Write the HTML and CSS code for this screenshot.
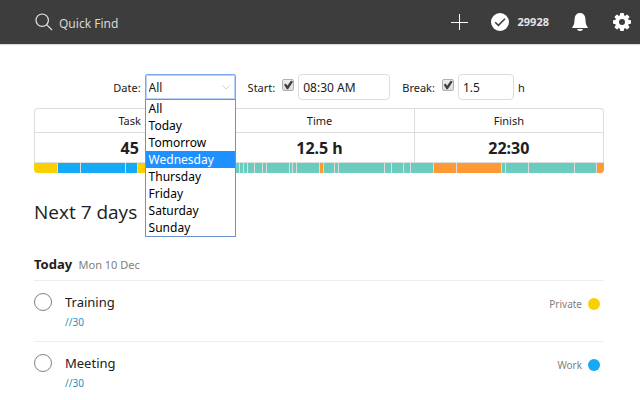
FILE: index.html
```html
<!DOCTYPE html>
<html lang="en">
<head>
<meta charset="utf-8">
<title>Next 7 days</title>
<link rel="stylesheet" href="styles.css">
</head>
<body>
<header class="topbar">
  <label class="search">
    <svg width="18" height="18" viewBox="0 0 18 18" fill="none" stroke="#e4e4e4" stroke-width="1.2" aria-hidden="true"><circle cx="7.2" cy="7.2" r="6.2"/><path d="M11.6 11.6 17 17"/></svg>
    <input class="search-input" type="text" placeholder="Quick Find" aria-label="Quick Find">
  </label>
  <nav class="actions">
    <button class="icon-button" aria-label="Add task"><svg width="18" height="18" viewBox="0 0 18 18" stroke="#fff" stroke-width="1"><path d="M9.5 1v16M1 9.5h17"/></svg></button>
    <button class="icon-button karma"><svg width="18" height="18" viewBox="0 0 18 18" aria-hidden="true"><circle cx="9" cy="9" r="9" fill="#fff"/><path d="M4.2 9.2 7.4 12.4 14 5.8" fill="none" stroke="#3d3d3d" stroke-width="1.5"/></svg><span>29928</span></button>
    <button class="icon-button" aria-label="Notifications"><svg width="16" height="18" viewBox="0 0 16 18" fill="#fff"><path d="M8 0C5 0 3 2 2.7 5L2.2 10.2C2 12 .4 13.2.2 15H15.8C15.6 13.2 14 12 13.8 10.2L13.3 5C13 2 11 0 8 0ZM5 16h6c-.4 1.3-1.500 2-3 2s-2.600-.7-3-2Z"/></svg></button>
    <button class="icon-button" aria-label="Settings"><svg width="18" height="18" viewBox="0 0 18 18"><g fill="#fff"><circle cx="9" cy="9" r="7"/><rect x="7" y="0" width="4" height="18" rx="1"/><rect x="7" y="0" width="4" height="18" rx="1" transform="rotate(45 9 9)"/><rect x="7" y="0" width="4" height="18" rx="1" transform="rotate(90 9 9)"/><rect x="7" y="0" width="4" height="18" rx="1" transform="rotate(135 9 9)"/></g><circle cx="9" cy="9" r="3" fill="#3d3d3d"/></svg></button>
  </nav>
</header>

<main class="content">
  <form class="filters">
    <div class="filter">
      <label for="date">Date:</label>
      <div class="dropdown">
        <select id="date" class="field date-field"><option>All</option><option>Today</option><option>Tomorrow</option><option>Wednesday</option><option>Thursday</option><option>Friday</option><option>Saturday</option><option>Sunday</option></select>
        <svg class="chevron" width="8" height="5" viewBox="0 0 8 5" fill="none" stroke="#d0d0d0" aria-hidden="true"><path d="M.5.5 4 4 7.500.5"/></svg>
        <ul class="menu" role="listbox" aria-label="Date">
          <li role="option">All</li>
          <li role="option">Today</li>
          <li role="option">Tomorrow</li>
          <li role="option" class="active" aria-selected="true">Wednesday</li>
          <li role="option">Thursday</li>
          <li role="option">Friday</li>
          <li role="option">Saturday</li>
          <li role="option">Sunday</li>
        </ul>
      </div>
    </div>
    <div class="filter">
      <label for="start-on">Start:</label>
      <div class="pair">
        <input id="start-on" class="check" type="checkbox" checked>
        <input class="field start-field" type="text" value="08:30 AM" aria-label="Start time">
      </div>
    </div>
    <div class="filter">
      <label for="break-on">Break:</label>
      <div class="pair">
        <input id="break-on" class="check" type="checkbox" checked>
        <input id="break-hours" class="field break-field" type="text" value="1.5" aria-label="Break hours">
        <label for="break-hours">h</label>
      </div>
    </div>
  </form>

  <section class="summary">
    <table class="totals">
      <thead><tr><th>Task</th><th>Time</th><th>Finish</th></tr></thead>
      <tbody><tr><td>45</td><td>12.5 h</td><td>22:30</td></tr></tbody>
    </table>
    <div class="timeline">
      <i class="yellow" style="flex-grow:23"></i>
      <i class="blue" style="flex-grow:22"></i>
      <i class="blue" style="flex-grow:44"></i>
      <i class="blue" style="flex-grow:11"></i>
      <i class="yellow" style="flex-grow:60"></i>
      <i style="flex-grow:40"></i>
      <i style="flex-grow:3"></i>
      <i style="flex-grow:3"></i>
      <i style="flex-grow:6"></i>
      <i style="flex-grow:7"></i>
      <i style="flex-grow:3"></i>
      <i style="flex-grow:22"></i>
      <i style="flex-grow:2"></i>
      <i style="flex-grow:3"></i>
      <i style="flex-grow:22"></i>
      <i class="orange" style="flex-grow:3"></i>
      <i style="flex-grow:10"></i>
      <i style="flex-grow:3"></i>
      <i style="flex-grow:45"></i>
      <i style="flex-grow:6"></i>
      <i style="flex-grow:11"></i>
      <i style="flex-grow:6"></i>
      <i style="flex-grow:22"></i>
      <i class="orange" style="flex-grow:22"></i>
      <i class="orange" style="flex-grow:44"></i>
      <i style="flex-grow:3"></i>
      <i style="flex-grow:22"></i>
      <i style="flex-grow:45"></i>
      <i style="flex-grow:21"></i>
      <i class="orange" style="flex-grow:7"></i>
    </div>
  </section>

  <h1 class="title">Next 7 days</h1>

  <section>
    <h2 class="day">Today <span class="day-date">Mon 10 Dec</span></h2>
    <ul class="tasks">
      <li class="task">
        <input id="training" class="done" type="checkbox">
        <div class="task-body">
          <label class="task-name" for="training">Training</label>
          <a class="estimate" href="#training">//30</a>
        </div>
        <span class="project">Private <i class="dot yellow"></i></span>
      </li>
      <li class="task">
        <input id="meeting" class="done" type="checkbox">
        <div class="task-body">
          <label class="task-name" for="meeting">Meeting</label>
          <a class="estimate" href="#meeting">//30</a>
        </div>
        <span class="project">Work <i class="dot blue"></i></span>
      </li>
    </ul>
  </section>
</main>
</body>
</html>
```
FILE: styles.css
```css
* {
  box-sizing: border-box;
}

body {
  margin: 0;
  background: #fff;
  color: #202020;
  font: 12px/16px "Noto Sans", "Open Sans", sans-serif;
}

input,
select,
button {
  margin: 0;
  font: inherit;
  color: inherit;
}

.topbar {
  display: flex;
  align-items: center;
  justify-content: space-between;
  height: 44px;
  padding: 0 9px 0 35px;
  background: #3d3d3d;
  box-shadow: 0 1px 1px #ddd;
}

.search {
  display: flex;
  align-items: center;
  gap: 6px;
}

.search-input {
  width: 160px;
  padding: 4px 0 0;
  border: 0;
  outline: 0;
  background: none;
}

.search-input::placeholder {
  color: #d8d8d8;
  opacity: 1;
}

.actions {
  display: flex;
  align-items: center;
  gap: 23px;
}

.icon-button {
  display: flex;
  align-items: center;
  gap: 9px;
  padding: 0;
  border: 0;
  background: none;
  color: #e4e4e4;
}

.icon-button:last-child {
  margin-left: 2px;
}

.karma {
  font-size: 11px;
  font-weight: 700;
}

.content {
  padding: 30px 36px 0 34px;
}

.filters {
  display: flex;
  align-items: center;
  justify-content: center;
  gap: 12px;
}

.filter,
.pair {
  display: flex;
  align-items: center;
  gap: 4px;
}

.filter + .filter {
  gap: 7px;
}

.filter label {
  padding-top: 2px;
  font-size: 11px;
}

.dropdown {
  position: relative;
}

.field {
  display: block;
  height: 26px;
  padding: 1px 4px 0;
  border: 1px solid #ddd;
  border-radius: 4px;
  outline: 0;
  background: #fff;
}

.date-field {
  width: 91px;
  padding: 1px 3px 0;
  border: 1px solid #7aa7ec;
  border-radius: 2px;
  box-shadow: inset 0 0 0 1px #b9d2f8;
  appearance: none;
}

.start-field {
  width: 92px;
}

.break-field {
  width: 56px;
}

.chevron {
  position: absolute;
  top: 11px;
  right: 6px;
}

.menu {
  position: absolute;
  top: 100%;
  left: 0;
  z-index: 1;
  width: 91px;
  margin: -1px 0 0;
  padding: 0;
  border: 1px solid #6c93cf;
  background: #fff;
  color: #000;
  line-height: 17px;
  list-style: none;
}

.menu li {
  padding: 0 3px;
}

.menu .active {
  background: #1e90ff;
  color: #fff;
}

.check {
  display: grid;
  place-items: center;
  width: 12px;
  height: 12px;
  margin-bottom: 4px;
  border: 1px solid #b0b0b0;
  border-radius: 2px;
  background: linear-gradient(#eee, #ddd);
  appearance: none;
}

.check:checked::after {
  content: "";
  width: 10px;
  height: 10px;
  background: #404040;
  clip-path: polygon(8% 48%, 25% 36%, 42% 58%, 78% 5%, 98% 18%, 48% 92%, 36% 92%);
}

.summary {
  margin-top: 8px;
}

.totals {
  width: 100%;
  border: 1px solid #ddd;
  border-bottom: 0;
  border-radius: 4px 4px 0 0;
  border-spacing: 0;
  table-layout: fixed;
  text-align: center;
}

.totals th {
  height: 24px;
  padding: 0;
  border-bottom: 1px solid #ddd;
  font-size: 11px;
  font-weight: 400;
}

.totals td {
  height: 29px;
  padding: 0;
  font-size: 16px;
  font-weight: 700;
}

.totals th + th,
.totals td + td {
  border-left: 1px solid #ddd;
}

.timeline {
  display: flex;
  gap: 1px;
  height: 11px;
  overflow: hidden;
  border-top: 1px solid #ddd;
  border-radius: 0 0 4px 4px;
  background: #ddd;
}

.timeline i {
  flex: 1 1 0;
  background: #6accbc;
}

.timeline .yellow,
.dot.yellow {
  background: #fad000;
}

.timeline .blue,
.dot.blue {
  background: #14aaf5;
}

.timeline .orange {
  background: #ff9933;
}

.title {
  margin: 25px 0 0;
  font-family: "Open Sans", "Noto Sans", sans-serif;
  font-size: 19px;
  font-weight: 400;
  line-height: 28px;
}

.day {
  margin: 28px 0 0;
  padding-bottom: 5px;
  border-bottom: 1px solid #eee;
  font-size: 13px;
  line-height: 20px;
}

.day-date {
  margin-left: 3px;
  color: #808080;
  font-size: 11px;
  font-weight: 400;
}

.tasks {
  margin: 0;
  padding: 0;
  list-style: none;
}

.task {
  display: flex;
  align-items: flex-start;
  padding: 12px 4px 12px 0;
  border-bottom: 1px solid #eee;
}

.done {
  width: 18px;
  height: 18px;
  border: 1px solid #808080;
  border-radius: 50%;
  appearance: none;
}

.task-body {
  display: flex;
  flex: 1;
  flex-direction: column;
  align-items: flex-start;
  gap: 4px;
  margin-left: 13px;
}

.task-name {
  font-size: 13px;
  line-height: 18px;
}

.estimate {
  color: #2a8fbd;
  font-size: 10px;
  line-height: 14px;
  text-decoration: none;
}

.project {
  display: flex;
  align-items: center;
  gap: 6px;
  color: #808080;
  font-size: 10px;
  line-height: 22px;
}

.dot {
  width: 12px;
  height: 12px;
  border-radius: 50%;
}
```
